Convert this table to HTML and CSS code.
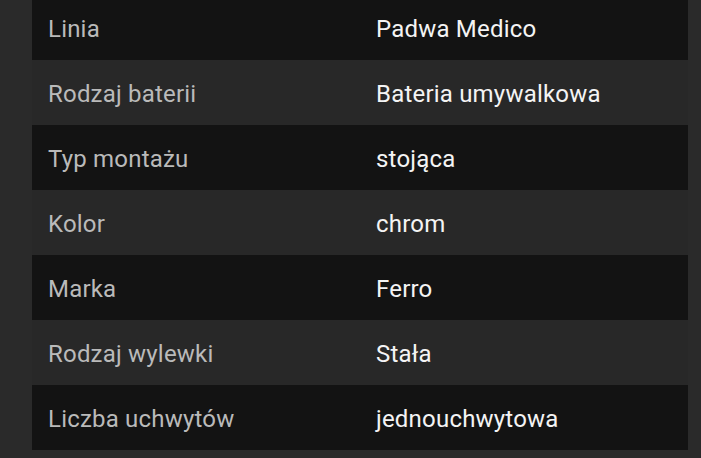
FILE: index.html
```html
<!DOCTYPE html>
<html lang="pl">
<head>
<meta charset="utf-8">
<link rel="stylesheet" href="styles.css">
</head>
<body>
<div class="specs">
  <div class="row dark"><div class="label">Linia</div><div class="value">Padwa Medico</div></div>
  <div class="row"><div class="label">Rodzaj baterii</div><div class="value">Bateria umywalkowa</div></div>
  <div class="row dark"><div class="label">Typ montażu</div><div class="value">stojąca</div></div>
  <div class="row"><div class="label">Kolor</div><div class="value">chrom</div></div>
  <div class="row dark"><div class="label">Marka</div><div class="value">Ferro</div></div>
  <div class="row"><div class="label">Rodzaj wylewki</div><div class="value">Stała</div></div>
  <div class="row dark"><div class="label">Liczba uchwytów</div><div class="value">jednouchwytowa</div></div>
</div>
</body>
</html>
```
FILE: styles.css
```css
html, body {
  margin: 0;
  padding: 0;
  background: #2a2a2a;
  height: 100%;
  overflow: hidden;
}
body {
  font-family: Roboto, "Noto Sans", sans-serif;
}
.specs {
  margin: -5px 13px 0 32px;
  display: flex;
  flex-direction: column;
}
.row {
  display: grid;
  grid-template-columns: 1fr 1fr;
  height: 65px;
  align-items: center;
  background: #282828;
  box-sizing: border-box;
  padding-top: 3px;
}
.row.dark {
  background: #131313;
}
.label, .value {
  padding-left: 16px;
  font-size: 24px;
  letter-spacing: 0.2px;
}
.label {
  color: #bababa;
}
.value {
  color: #f4f4f4;
}
```
